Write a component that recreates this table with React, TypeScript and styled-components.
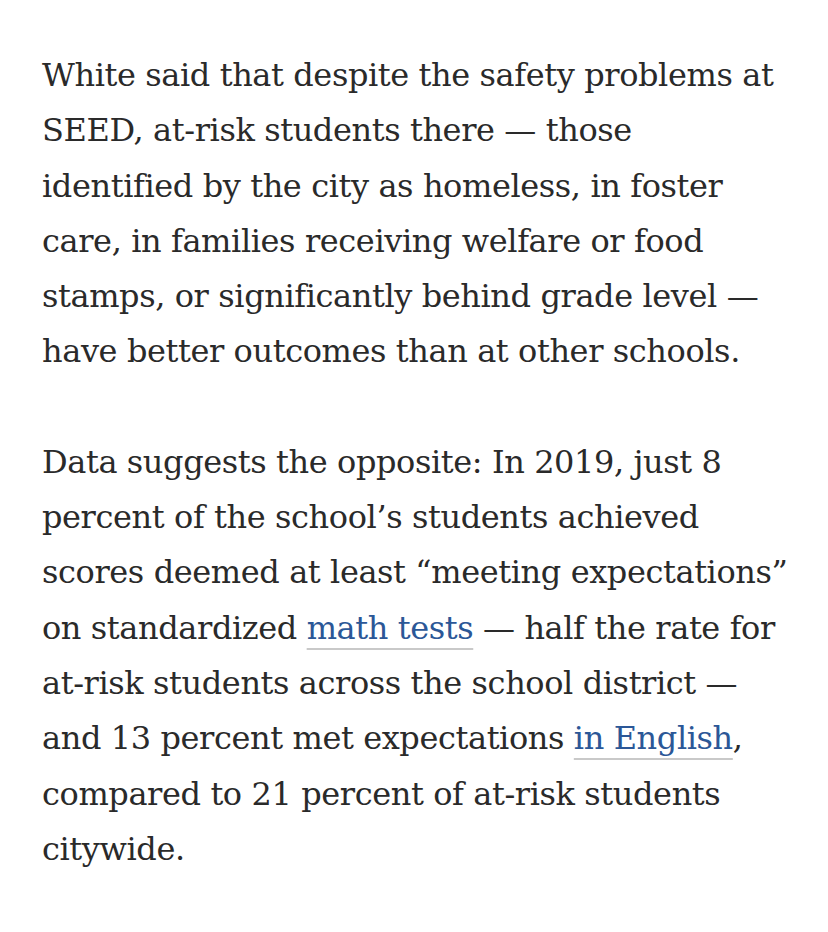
import React from 'react'
import styled, { createGlobalStyle } from 'styled-components'

const GlobalStyle = createGlobalStyle`
    html, body {
        margin: 0;
        padding: 0;
        background: #ffffff;
    }
`

const ArticleBody = styled.article`
    padding: 48px 30px 40px 42px;
    font-family: "DejaVu Serif", "Liberation Serif", Georgia, serif;
    font-size: 32px;
    letter-spacing: -0.4px;
    line-height: 55.3px;
    color: #2a2a2a;
`

// the two paragraphs wrap at slightly different measures in the original
const Paragraph = styled.p<{ $measure: number }>`
    margin: 0 0 55px;
    max-width: ${props => props.$measure}px;

    &:last-child {
        margin-bottom: 0;
    }
`

const InlineLink = styled.a`
    color: #2b5797;
    text-decoration: underline;
    text-decoration-color: #c9c9c9;
    text-decoration-thickness: 2px;
    text-underline-offset: 9px;
    cursor: pointer;
`

const App: React.FC = () => {
    return (
        <>
            <GlobalStyle />
            <ArticleBody>
                <Paragraph $measure={742}>
                    White said that despite the safety problems at SEED, at-risk students there — those
                    identified by the city as homeless, in foster care, in families receiving welfare or food
                    stamps, or significantly behind grade level — have better outcomes than at other schools.
                </Paragraph>
                <Paragraph $measure={754}>
                    Data suggests the opposite: In 2019, just 8 percent of the school’s students achieved
                    scores deemed at least “meeting expectations” on standardized{' '}
                    <InlineLink href="#">math tests</InlineLink> — half the rate for at-risk students across
                    the school district — and 13 percent met expectations{' '}
                    <InlineLink href="#">in English</InlineLink>, compared to 21 percent of at-risk students
                    citywide.
                </Paragraph>
            </ArticleBody>
        </>
    )
}

export default App
